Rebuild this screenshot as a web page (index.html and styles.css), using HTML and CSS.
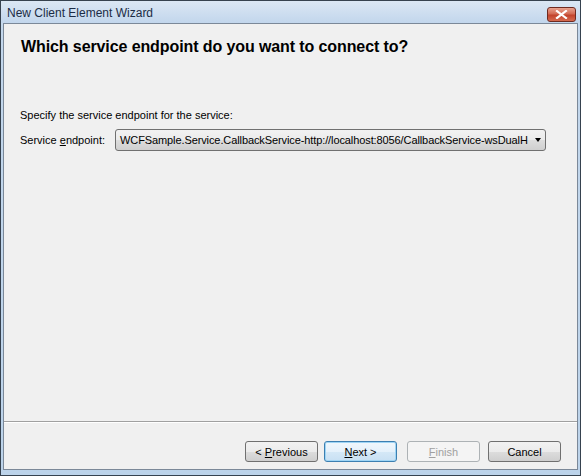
FILE: index.html
```html
<!DOCTYPE html>
<html lang="en">
<head>
    <meta charset="UTF-8">
    <meta name="viewport" content="width=device-width, initial-scale=1.0">
    <title>New Client Element Wizard</title>
    <link rel="stylesheet" href="styles.css">
</head>
<body>
    <div class="window">
        <!-- Title bar -->
        <div class="title-bar">
            <span class="title-text">New Client Element Wizard</span>
            <div class="close-btn">
                <svg width="13" height="9" viewBox="0 0 13 9">
                    <path d="M2 1 L11 8 M11 1 L2 8" stroke="#fff" stroke-width="2.2" stroke-linecap="square"/>
                </svg>
            </div>
        </div>

        <div class="client">
            <div class="page">
                <h1 class="heading">Which service endpoint do you want to connect to?</h1>
                <p class="hint">Specify the service endpoint for the service:</p>
                <div class="field-row">
                    <label class="field-label">Service <u>e</u>ndpoint:</label>
                    <div class="combo">
                        <span class="combo-text">WCFSample.Service.CallbackService-http://localhost:8056/CallbackService-wsDualH</span>
                        <span class="combo-arrow"></span>
                    </div>
                </div>
            </div>

            <div class="separator"></div>

            <div class="buttons">
                <button class="btn">&lt; <u>P</u>revious</button>
                <button class="btn btn-default"><u>N</u>ext &gt;</button>
                <button class="btn btn-disabled"><u>F</u>inish</button>
                <button class="btn">Cancel</button>
            </div>
        </div>
    </div>
</body>
</html>
```

FILE: styles.css
```css
body {
    margin: 0;
    font-family: "Liberation Sans", Arial, sans-serif;
}

.window {
    width: 581px;
    height: 476px;
    box-sizing: border-box;
    border: 1px solid #36424f;
    background: linear-gradient(#cfdff0, #c3d7ec 30px, #bcd3ea);
    display: flex;
    flex-direction: column;
}

/* Title bar */
.title-bar {
    height: 22px;
    display: flex;
    align-items: center;
    padding-left: 6px;
    padding-right: 4px;
    background: linear-gradient(#dbe7f4, #c2d6ec);
}

.title-text {
    font-size: 12px;
    color: #1b2c45;
    margin-top: 2px;
}

.close-btn {
    margin-left: auto;
    width: 27px;
    height: 13px;
    margin-top: 4px;
    border: 1px solid #6e2a20;
    border-radius: 3px;
    background: linear-gradient(#e8a390, #d36a53 45%, #c2432c 55%, #d56b50);
    display: flex;
    align-items: center;
    justify-content: center;
}

.client {
    flex: 1;
    margin: 0 2px 5px 2px;
    border: 1px solid #7b8898;
    background-color: #f0f0f0;
    display: flex;
    flex-direction: column;
}

.page {
    flex: 1;
    padding: 14px 16px 0 16px;
}

.heading {
    margin: 0 0 0 1px;
    font-size: 16px;
    font-weight: bold;
    color: #000;
    letter-spacing: -0.1px;
}

.hint {
    margin: 53px 0 0 0;
    font-size: 11px;
    color: #000;
}

.field-row {
    display: flex;
    align-items: center;
    margin-top: 8px;
}

.field-label {
    font-size: 11px;
    width: 95px;
}

.combo {
    width: 431px;
    height: 22px;
    box-sizing: border-box;
    border: 1px solid #707070;
    border-radius: 3px;
    background: linear-gradient(#f2f2f2, #ebebeb 50%, #dddddd 51%, #cfcfcf);
    display: flex;
    align-items: center;
    padding-left: 4px;
}

.combo-text {
    font-size: 11px;
    letter-spacing: -0.1px;
    white-space: nowrap;
    width: 411px;
}

.combo-arrow {
    margin-left: 4px;
    width: 0;
    height: 0;
    border-left: 3.5px solid transparent;
    border-right: 3.5px solid transparent;
    border-top: 4px solid #000;
}

.separator {
    height: 1px;
    border-top: 1px solid #a0a0a0;
    background-color: #fff;
}

.buttons {
    height: 46px;
    box-sizing: border-box;
    padding: 18px 16px 0 0;
    display: flex;
    justify-content: flex-end;
}

.btn {
    width: 73px;
    height: 21px;
    box-sizing: border-box;
    border: 1px solid #707070;
    border-radius: 3px;
    background: linear-gradient(#f2f2f2, #ebebeb 50%, #dddddd 51%, #cfcfcf);
    font-family: "Liberation Sans", Arial, sans-serif;
    font-size: 11px;
    color: #000;
    padding: 0;
    margin-left: 8px;
}

.btn-default {
    margin-left: 6px;
    border-color: #3c7fb1;
    box-shadow: inset 0 0 0 1px #9fd5f5;
    background: linear-gradient(#f0f7fc, #e5f1fb 50%, #d5e8f7 51%, #c8e0f3);
}

.btn-disabled {
    margin-left: 10px;
    border-color: #adb2b5;
    background: #f4f4f4;
    color: #a0a0a0;
}
```
